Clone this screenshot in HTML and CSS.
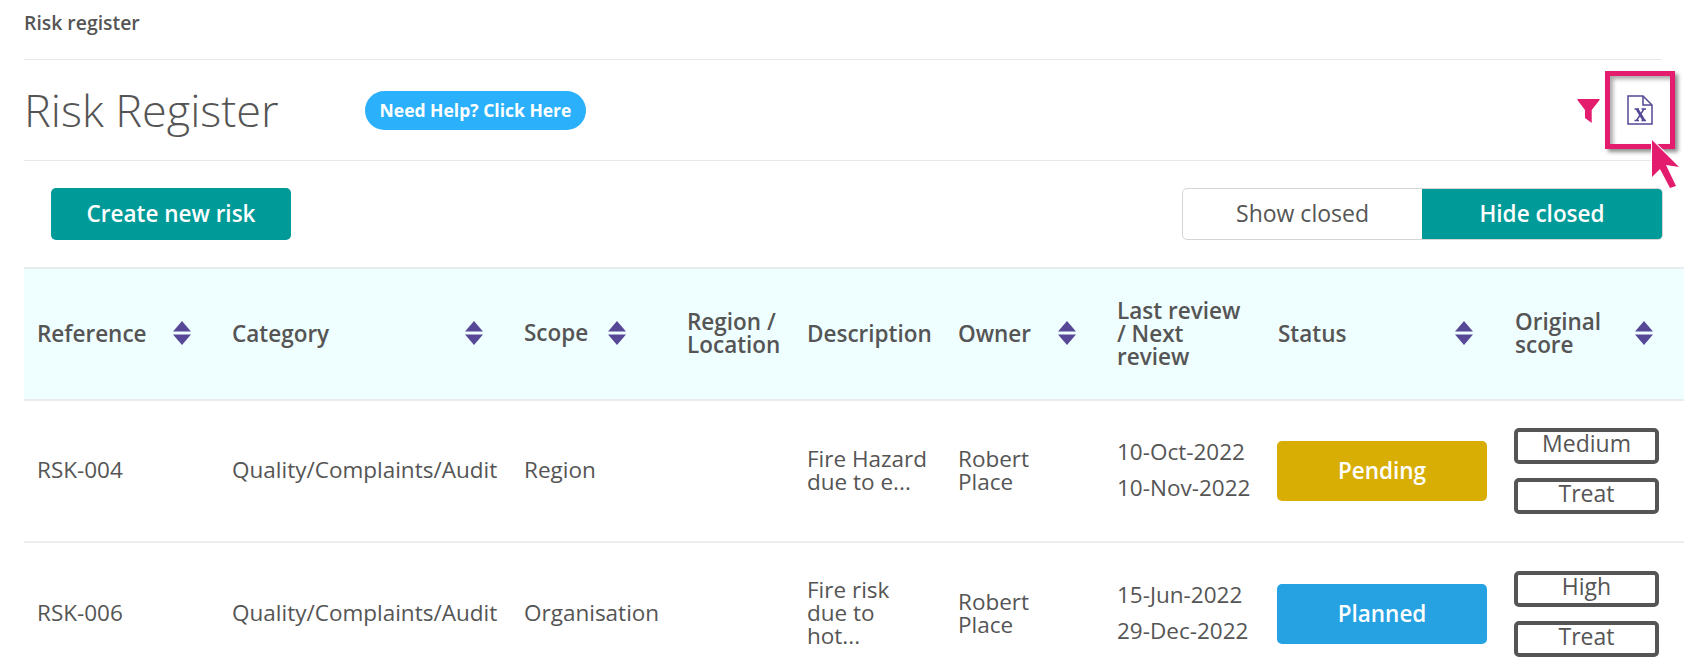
FILE: index.html
```html
<!DOCTYPE html>
<html lang="en">
<head>
<meta charset="utf-8">
<title>Risk Register</title>
<link rel="stylesheet" href="styles.css">
</head>
<body>
<div class="page">
  <div class="breadcrumb">Risk register</div>
  <div class="title-row">
    <h1 class="title">Risk Register</h1>
    <a class="help-btn">Need Help? Click Here</a>
    <div class="tools">
      <svg class="funnel" viewBox="0 0 23 24"><path d="M1 0H22Q23 0 22.6 1L14.7 11V24L8 19V11L.4 1Q0 0 1 0Z"/></svg>
      <svg class="excel" viewBox="0 0 26 30" fill="none"><path d="M1 1H16L25 10V29H1Z" stroke-width="1.5"/><path d="M16 1V10H25" stroke-width="1.5"/><path d="M7.5 14H12M14.5 14H19M7.5 25.5H12M14.5 25.5H19" stroke-width="1.4"/><path d="M10 14L17 25.5" stroke-width="2.8"/><path d="M17 14L9.5 25.5" stroke-width="1.4"/></svg>
    </div>
  </div>
  <div class="action-row">
    <a class="create-btn">Create new risk</a>
    <div class="toggle">
      <span class="toggle-item toggle-off">Show closed</span>
      <span class="toggle-item toggle-on">Hide closed</span>
    </div>
  </div>
  <table class="grid">
    <colgroup>
      <col class="c-ref"><col class="c-cat"><col class="c-scope"><col class="c-region"><col class="c-desc"><col class="c-owner"><col class="c-date"><col class="c-status"><col class="c-score">
    </colgroup>
    <thead>
      <tr>
        <th><div class="th-in"><span>Reference</span><svg class="sort" viewBox="0 0 18 24"><path d="M9 0L18 10.5H0Z"/><path d="M0 13.5H18L9 24Z"/></svg></div></th>
        <th><div class="th-in"><span>Category</span><svg class="sort" viewBox="0 0 18 24"><path d="M9 0L18 10.5H0Z"/><path d="M0 13.5H18L9 24Z"/></svg></div></th>
        <th><div class="th-in th-scope"><span class="scope-label">Scope</span><svg class="sort" viewBox="0 0 18 24"><path d="M9 0L18 10.5H0Z"/><path d="M0 13.5H18L9 24Z"/></svg></div></th>
        <th>Region / Location</th>
        <th>Description</th>
        <th><div class="th-in"><span>Owner</span><svg class="sort" viewBox="0 0 18 24"><path d="M9 0L18 10.5H0Z"/><path d="M0 13.5H18L9 24Z"/></svg></div></th>
        <th class="th-date">Last review / Next review</th>
        <th><div class="th-in th-shift"><span>Status</span><svg class="sort" viewBox="0 0 18 24"><path d="M9 0L18 10.5H0Z"/><path d="M0 13.5H18L9 24Z"/></svg></div></th>
        <th><div class="th-in th-last th-shift"><span class="score-head">Original score</span><svg class="sort" viewBox="0 0 18 24"><path d="M9 0L18 10.5H0Z"/><path d="M0 13.5H18L9 24Z"/></svg></div></th>
      </tr>
    </thead>
    <tbody>
      <tr>
        <td>RSK-004</td>
        <td>Quality/Complaints/Audit</td>
        <td>Region</td>
        <td></td>
        <td class="td-desc">Fire Hazard due to e...</td>
        <td class="td-owner">Robert Place</td>
        <td><div class="dates"><span>10-Oct-2022</span><span>10-Nov-2022</span></div></td>
        <td class="td-fill"><div class="badge pending">Pending</div></td>
        <td class="td-fill"><div class="scores"><span class="score">Medium</span><span class="score">Treat</span></div></td>
      </tr>
      <tr>
        <td>RSK-006</td>
        <td>Quality/Complaints/Audit</td>
        <td>Organisation</td>
        <td></td>
        <td class="td-desc">Fire risk due to hot...</td>
        <td class="td-owner">Robert Place</td>
        <td><div class="dates"><span>15-Jun-2022</span><span>29-Dec-2022</span></div></td>
        <td class="td-fill"><div class="badge planned">Planned</div></td>
        <td class="td-fill"><div class="scores"><span class="score">High</span><span class="score">Treat</span></div></td>
      </tr>
    </tbody>
  </table>
</div>
<div class="highlight"></div>
<svg class="cursor" viewBox="0 0 36 56"><path d="M4 4L31 31L18 29L28 50L22 52L12 33L4 41Z"/></svg>
</body>
</html>
```

FILE: styles.css
```css
* { box-sizing: border-box; }
html, body { margin: 0; height: 671px; overflow: hidden; background: #fff; }
body { font-family: "Open Sans", "Liberation Sans", sans-serif; color: #555; position: relative; }
.page { padding-left: 24px; }
.breadcrumb { height: 60px; margin-right: 29px; padding-top: 10px; font-size: 19.4px; line-height: 26px; font-weight: 600; border-bottom: 1px solid #e8e8e8; }
.title-row { height: 101px; margin-right: 29px; display: flex; align-items: center; border-bottom: 1px solid #e8e8e8; padding-right: 9px; }
.title { margin: 0; font-size: 45px; font-weight: 300; line-height: 60px; width: 341px; }
.help-btn { height: 39px; width: 221px; border-radius: 20px; background: #2bb0fb; color: #fff; font-size: 17.5px; font-weight: 700; display: flex; align-items: center; justify-content: center; }
.tools { margin-left: auto; display: flex; align-items: center; gap: 27px; }
.funnel { width: 23px; height: 24px; margin-top: 2px; fill: #e31c6e; }
.excel { width: 26px; height: 30px; stroke: #574797; }
.action-row { height: 106px; padding: 27px 28px 0 27px; display: flex; justify-content: space-between; align-items: flex-start; }
.create-btn { width: 240px; height: 52px; padding-bottom: 2px; background: #009a98; color: #fff; border-radius: 5px; font-size: 22.5px; font-weight: 600; display: flex; align-items: center; justify-content: center; }
.toggle { display: flex; width: 481px; height: 52px; border: 1px solid #d5d5d5; border-radius: 5px; overflow: hidden; }
.toggle-item { padding-bottom: 2px; font-size: 23px; display: flex; align-items: center; justify-content: center; }
.toggle-off { width: 239px; }
.toggle-on { flex: 1; background: #009a98; color: #fff; font-weight: 600; font-size: 22.5px; }
.grid { width: 1660px; table-layout: fixed; border-collapse: collapse; font-size: 22.5px; line-height: 23px; }
.c-ref { width: 195px; }
.c-cat { width: 292px; }
.c-scope { width: 163px; }
.c-region { width: 120px; }
.c-desc { width: 151px; }
.c-owner { width: 159px; }
.c-date { width: 160px; }
.c-status { width: 237px; }
.c-score { width: 183px; }
.grid th { height: 132px; background: #effeff; border-top: 2px solid #e8ecec; border-bottom: 2px solid #e8ecec; text-align: left; font-weight: 600; padding: 0 0 2px 13px; vertical-align: middle; }
.grid td { height: 142px; padding: 0 13px 3px; border-bottom: 2px solid #eee; vertical-align: middle; }
.grid tbody tr:nth-child(2) td { height: 144px; }
.grid .td-fill { padding-bottom: 0; }
.grid .td-desc { padding-right: 16px; }
.grid .td-owner { padding-right: 50px; }
.grid .th-date { padding-right: 20px; }
.th-in { display: flex; align-items: center; justify-content: space-between; padding-right: 28px; }
.th-scope { padding-right: 48px; }
.th-last { padding-right: 31px; }
.th-shift { margin-left: 1px; }
.scope-label { margin-bottom: 2px; }
.score-head { width: 100px; }
.sort { width: 18px; height: 24px; fill: #574797; flex: none; }
.dates { display: flex; flex-direction: column; gap: 13px; }
.badge { height: 60px; width: 210px; padding-bottom: 1px; border-radius: 5px; color: #fff; font-size: 22.5px; font-weight: 600; display: flex; align-items: center; justify-content: center; }
.pending { background: #d8ae05; }
.planned { background: #26a2e3; }
.scores { display: flex; flex-direction: column; gap: 14px; width: 145px; }
.score { height: 36px; border: 4px solid #555; border-radius: 5px; text-align: center; line-height: 22px; font-size: 23px; }
.highlight { position: absolute; left: 1605px; top: 71px; width: 70px; height: 78px; border: 5px solid #e31c6e; box-shadow: 3px 3px 4px rgba(0,0,0,.45), inset 3px 3px 4px rgba(0,0,0,.35); }
.cursor { position: absolute; left: 1648px; top: 136px; width: 36px; height: 56px; fill: #e31c6e; stroke: #fff; stroke-width: 2; paint-order: stroke; }
```
